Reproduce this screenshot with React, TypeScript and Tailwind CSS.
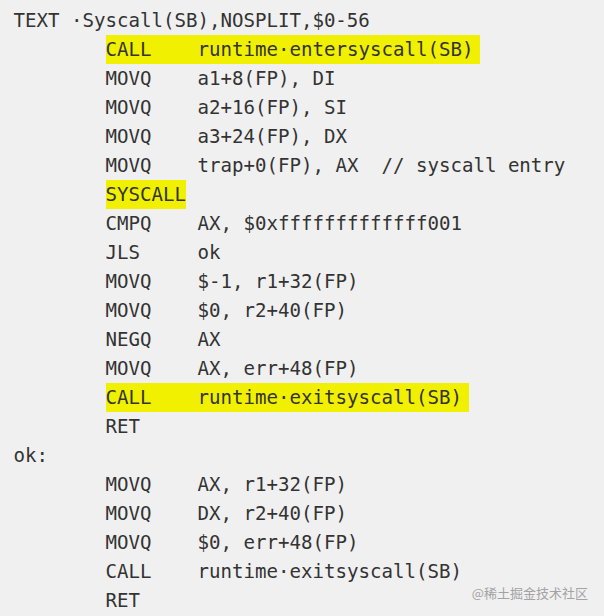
type Line = { label?: string; op?: string; arg?: string; hl?: boolean };

const lines: Line[] = [
  { label: 'TEXT ·Syscall(SB),NOSPLIT,$0-56' },
  { op: 'CALL', arg: 'runtime·entersyscall(SB)', hl: true },
  { op: 'MOVQ', arg: 'a1+8(FP), DI' },
  { op: 'MOVQ', arg: 'a2+16(FP), SI' },
  { op: 'MOVQ', arg: 'a3+24(FP), DX' },
  { op: 'MOVQ', arg: 'trap+0(FP), AX  // syscall entry' },
  { op: 'SYSCALL', hl: true },
  { op: 'CMPQ', arg: 'AX, $0xfffffffffffff001' },
  { op: 'JLS', arg: 'ok' },
  { op: 'MOVQ', arg: '$-1, r1+32(FP)' },
  { op: 'MOVQ', arg: '$0, r2+40(FP)' },
  { op: 'NEGQ', arg: 'AX' },
  { op: 'MOVQ', arg: 'AX, err+48(FP)' },
  { op: 'CALL', arg: 'runtime·exitsyscall(SB)', hl: true },
  { op: 'RET' },
  { label: 'ok:' },
  { op: 'MOVQ', arg: 'AX, r1+32(FP)' },
  { op: 'MOVQ', arg: 'DX, r2+40(FP)' },
  { op: 'MOVQ', arg: '$0, err+48(FP)' },
  { op: 'CALL', arg: 'runtime·exitsyscall(SB)' },
  { op: 'RET' },
];

function CodeLine({ line }: { line: Line }) {
  if (line.label) {
    return <div className="h-[29px] whitespace-pre">{line.label}</div>;
  }
  const body = (
    <>
      <span className={line.arg ? 'inline-block w-[92px]' : ''}>{line.op}</span>
      {line.arg && <span>{line.arg}</span>}
    </>
  );
  return (
    <div className="flex h-[29px] whitespace-pre">
      <span className="inline-block w-[92px] shrink-0" />
      {line.hl ? (
        <span className={`inline-block bg-[#f0f000] ${line.arg ? 'pr-[7px]' : ''}`}>{body}</span>
      ) : (
        <span>{body}</span>
      )}
    </div>
  );
}

export default function App() {
  return (
    <div className="relative h-[616px] w-[604px] overflow-hidden bg-[#f0f0f0]">
      <div className="pl-[13.5px] pt-[6px] font-['DejaVu_Sans_Mono',monospace] text-[19.1px] leading-[29px] text-[#333333]">
        {lines.map((l, i) => (
          <CodeLine key={i} line={l} />
        ))}
      </div>
      <div className="absolute bottom-[15px] right-[16px] font-['Noto_Sans_CJK_SC',sans-serif] text-[13px] leading-[16px] text-[#a3a3a3]">
        @稀土掘金技术社区
      </div>
    </div>
  );
}
